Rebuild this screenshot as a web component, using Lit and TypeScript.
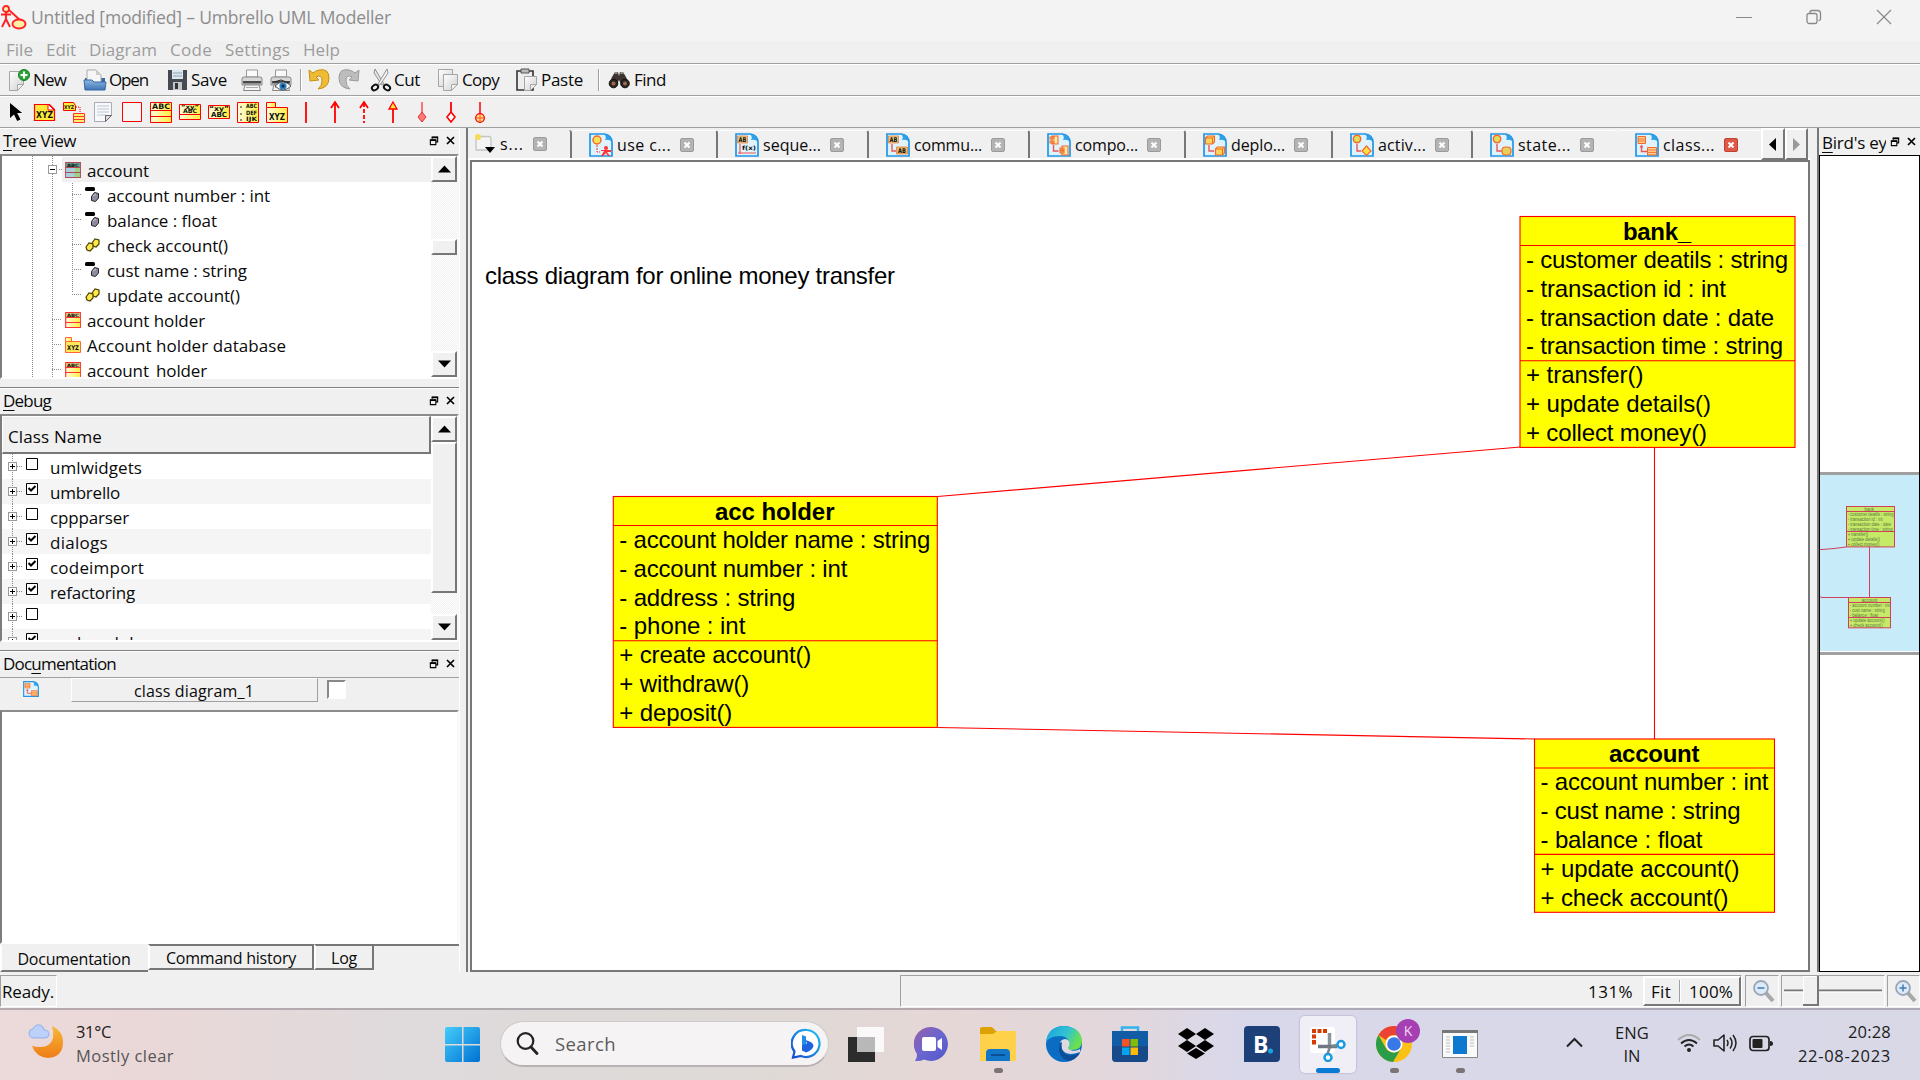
import { LitElement, html, css, svg } from "lit";
import { customElement, property } from "lit/decorators.js";
import { styleMap } from "lit/directives/style-map.js";
import { classMap } from "lit/directives/class-map.js";

/* One line of text whose tracking is set so that it fills a given width. */
@customElement("fit-text")
class FitText extends LitElement {
  @property({ type: Number }) w = 0;
  @property() text = "";
  @property({ type: Number }) accel = -1;
  static styles = css`
    :host { display: inline-block; white-space: nowrap; flex: none; }
    .run { display: inline-block; white-space: pre; }
    .key { text-decoration: underline; text-underline-offset: 3px; text-decoration-thickness: 1px; }
  `;
  render() {
    const a = this.accel;
    return a < 0
      ? html`<span class="run">${this.text}</span>`
      : html`<span class="run">${this.text.slice(0, a)}<span class="key">${this.text[a]}</span>${this.text.slice(a + 1)}</span>`;
  }
  updated() {
    const run = this.renderRoot.querySelector(".run") as HTMLElement;
    run.style.letterSpacing = "0px";
    const natural = run.getBoundingClientRect().width;
    if (this.w && natural) {
      run.style.letterSpacing = (this.w - natural) / this.text.length + "px";
      this.style.width = this.w + "px";
    }
  }
}

const fit = (text: string, w: number, accel = -1) => html`<fit-text .text=${text} .w=${w} .accel=${accel}></fit-text>`;

/* ---------- shared gradients ---------- */
const defs = svg`<defs>
  <linearGradient id="yl" x1="0" y1="0" x2="1" y2="0"><stop offset="0" stop-color="#fffde0"/><stop offset="1" stop-color="#ffef3a"/></linearGradient>
  <linearGradient id="gr" x1="0" y1="0" x2="1" y2="1"><stop offset="0" stop-color="#fff"/><stop offset="1" stop-color="#cfcfcf"/></linearGradient>
  <linearGradient id="bl" x1="0" y1="0" x2="0" y2="1"><stop offset="0" stop-color="#8fb7e2"/><stop offset="1" stop-color="#3f74b5"/></linearGradient>
  <linearGradient id="win" x1="0" y1="0" x2="1" y2="1"><stop offset="0" stop-color="#44cdfb"/><stop offset="1" stop-color="#0070d2"/></linearGradient>
  <linearGradient id="moon" x1="0" y1="0" x2="0" y2="1"><stop offset="0" stop-color="#f7b83a"/><stop offset="1" stop-color="#ef7d16"/></linearGradient>
</defs>`;

const ic = (body: unknown, w = 24, h = 24, vb = `0 0 ${w} ${h}`) =>
  html`<svg class="ic" width=${w} height=${h} viewBox=${vb}>${defs}${body}</svg>`;

/* ---------- toolbar icons ---------- */
const page = (x: number, y: number, w: number, h: number) =>
  svg`<path d="M${x} ${y}h${w}v${h - 6}l-6 6h-${w - 6}z" fill="url(#gr)" stroke="#a5a5a5"/><path d="M${x + w} ${y + h - 6}h-6v6z" fill="#eee" stroke="#999" stroke-width=".8"/>`;

const printer = svg`<path d="M6.500 2h11v7h-11z" fill="#fafafa" stroke="#999"/><path d="M2 11q0-2 2-2h16q2 0 2 2v6H2z" fill="#d6d6d6" stroke="#888"/><path d="M3 13h18v2.500H3z" fill="#4a4a4a"/><path d="M5 17h14l1.500 5.500h-17z" fill="#f4f4f4" stroke="#888"/><path d="M6 19.500h12" stroke="#aaa"/>`;

const ICONS: Record<string, unknown> = {
  new: svg`${page(1.5, 3.5, 14, 19)}<circle cx="16" cy="7" r="5.500" fill="#2ca336" stroke="#16801f"/><path d="M16 3.500v7M12.500 7h7" stroke="#fff" stroke-width="2"/>`,
  open: svg`<path d="M2 10h20v12H2z" fill="#3a6ba8"/><path d="M4 2h9l5 5v8H4z" fill="#f6f6f6" stroke="#aaa"/><path d="M13 2l5 5h-5z" fill="#ccc"/><path d="M1 12h8l2 2h12l-1 8H2z" fill="url(#bl)" stroke="#3868a5"/>`,
  save: svg`<path d="M2 2h19v20H2z" fill="#454a52"/><path d="M6 2h11v9H6z" fill="#dce6ef"/><path d="M7 5h9M7 8h9" stroke="#8ba3bb"/><path d="M7 14h9v8H7z" fill="#c2c6cb"/><path d="M9 15h3v6H9z" fill="#333"/>`,
  print: printer,
  preview: svg`${printer}<path d="M6 18q8-8 16 0q-8 8-16 0z" fill="#fff" stroke="#555"/><circle cx="14" cy="18" r="3.600" fill="#2d7fc4"/><circle cx="14" cy="18" r="1.500" fill="#0a2743"/><path d="M5 14l7-2l8 3" stroke="#222" fill="none"/>`,
  undo: svg`<path d="M2 2l1 11l9-1l-3-3q6-3 6 4q0 5-4 8q11-1 11-11q0-10-10-8q-4 1-6 3z" fill="#eebb35" stroke="#c78f13"/>`,
  redo: svg`<path d="M22 2l-1 11l-9-1l3-3q-6-3-6 4q0 5 4 8q-11-1-11-11q0-10 10-8q4 1 6 3z" fill="#bdbdbd" stroke="#9b9b9b"/>`,
  cut: svg`<path d="M6 1l9 15l-2 1L5 5z" fill="#e4e4e4" stroke="#777" stroke-width=".8"/><path d="M18 1l-9 15l2 1L19 5z" fill="#f4f4f4" stroke="#777" stroke-width=".8"/><ellipse cx="6" cy="19.500" rx="3.300" ry="2.500" fill="none" stroke="#111" stroke-width="2" transform="rotate(-35 6 19.500)"/><ellipse cx="18" cy="19.500" rx="3.300" ry="2.500" fill="none" stroke="#111" stroke-width="2" transform="rotate(35 18 19.500)"/>`,
  copy: svg`${page(1.500, 1.500, 14, 17)}${page(6.500, 6.500, 14, 16)}`,
  paste: svg`<path d="M2 3h16v19H2z" fill="#eee" stroke="#333" stroke-width="1.600"/><path d="M6 1h8v4H6z" fill="#bbb" stroke="#555"/>${page(9.500, 8.500, 12, 14)}`,
  find: svg`<path d="M4 9l3-5h3l1 4l1-4h3l3 5l3 7h-8l-2-4l-2 4H1z" fill="#3d3432"/><path d="M6.500 5h3M12.500 5h3" stroke="#aaa" stroke-width="1.500"/><circle cx="5.500" cy="15.500" r="4.300" fill="#2c2524" stroke="#111"/><circle cx="17" cy="15.500" r="4.300" fill="#2c2524" stroke="#111"/><circle cx="5.500" cy="15.500" r="2" fill="#a06a4a"/><circle cx="17" cy="15.500" r="2" fill="#a06a4a"/>`,
};

const R = "#f00";
const lab = (x: number, y: number, s: string, size = 8, len = 16) =>
  svg`<text x=${x} y=${y} font-family="DejaVu Sans, sans-serif" font-weight="bold" font-size=${size} textLength=${len} lengthAdjust="spacingAndGlyphs" fill="#111">${s}</text>`;

const TOOLS: unknown[] = [
  svg`<path d="M6 3v15l4-3.500l3.200 6.500l3.300-1.600l-3.300-6.400h5z" fill="#000"/>`,
  svg`<path d="M1.500 4.500h15l5 5v11h-20z" fill="#ffe93a" stroke="${R}" stroke-width="1.200"/><path d="M15 4l6 6h-6z" fill="#fff" stroke="${R}"/>${lab(3, 17.500, "XYZ", 8, 17)}`,
  svg`<path d="M1.500 2.500h10l2 3v5h-12z" fill="#ffe93a" stroke="${R}"/>${lab(2, 9, "XYZ", 5, 10)}<path d="M14 7h4v5" fill="none" stroke="${R}" stroke-dasharray="1 1"/><path d="M11.500 13.500h11v9h-11z" fill="#fff06a" stroke="#f33"/><path d="M12 16.500h10M12 19.500h10" stroke="#f33"/>`,
  svg`<path d="M3.500 2.500h17v13l-6 6h-11z" fill="#f7f9fa" stroke="#aab"/><path d="M6 6h12M6 9h12M6 12h12M6 15h9" stroke="#bcc8d2"/><path d="M20.500 15.500l-6 0v6z" fill="#ddd" stroke="#666"/>`,
  svg`<path d="M2.500 2.500h19v19h-19z" fill="#fafafa" fill-opacity=".5" stroke="${R}"/>`,
  svg`<path d="M1.500 2.500h21v20h-21z" fill="url(#yl)" stroke="${R}"/>${lab(3, 9, "ABC", 7.500, 18)}<path d="M1 10.500h22M1 16.500h22" stroke="${R}"/>`,
  svg`<path d="M1.500 4.500h21v15h-21z" fill="url(#yl)" stroke="${R}"/>${lab(3, 9, "“xy”", 6, 18)}${lab(5, 13, "ABC", 6, 14)}<path d="M1 14.500h22" stroke="${R}"/>`,
  svg`<path d="M1.500 5.500h21v13h-21z" fill="url(#yl)" stroke="${R}"/>${lab(2, 11, "“xy”", 7, 20)}${lab(4, 17, "ABC", 7, 16)}`,
  svg`<path d="M1.500 2.500h21v20h-21z" fill="url(#yl)" stroke="${R}"/>${lab(10, 8, "ABC", 6, 11)}${lab(10, 15, "DEF", 6, 11)}${lab(10, 21, "IJK", 6, 11)}<path d="M4 7h2M4 14h2M4 20h2" stroke="#222"/>`,
  svg`<path d="M1.500 2.500h9v5h-9z" fill="url(#yl)" stroke="${R}"/><path d="M1.500 7.500h21v15h-21z" fill="url(#yl)" stroke="${R}"/>${lab(4, 20, "XYZ", 9, 16)}`,
  svg`<path d="M12 2v21" stroke="${R}" stroke-width="1.800"/>`,
  svg`<path d="M12 2v21M8 8l4-6l4 6" fill="none" stroke="${R}" stroke-width="1.800"/>`,
  svg`<path d="M12 3v20" stroke="${R}" stroke-width="1.800" stroke-dasharray="4 2"/><path d="M8 8l4-6l4 6" fill="none" stroke="${R}" stroke-width="1.800"/>`,
  svg`<path d="M12 8v15" stroke="${R}" stroke-width="1.800"/><path d="M8 9l4-7l4 7z" fill="#ffe93a" stroke="${R}" stroke-width="1.300"/>`,
  svg`<path d="M12 2v14" stroke="#f66" stroke-width="1.800"/><path d="M12 12l4 5l-4 5l-4-5z" fill="#f77" stroke="#d33"/>`,
  svg`<path d="M12 2v11" stroke="${R}" stroke-width="1.800"/><path d="M12 12l4 5l-4 5l-4-5z" fill="#fff" stroke="${R}" stroke-width="1.600"/>`,
  svg`<path d="M12 2v21M7.500 18h9" stroke="${R}" stroke-width="1.500"/><circle cx="12" cy="18" r="4.300" fill="#ffe26a" stroke="${R}" stroke-width="1.300"/><path d="M12 14v8M8 18h8" stroke="#f55"/>`,
];

/* ---------- tree icons ---------- */
const T_ICONS: Record<string, unknown> = {
  cls: svg`<path d="M.7.700h15v15h-15z" fill="url(#yl)" stroke="#f33" stroke-width="1.200"/><path d="M1 1h14v4H1z" fill="#d6bd72"/>${lab(2, 4.800, "ABC", 4.500, 12)}<path d="M0 5.500h16M0 10.500h16" stroke="#f33"/>`,
  clsSel: svg`<path d="M.7.700h15v15h-15z" fill="#9fd08a" stroke="#b04a5a" stroke-width="1.200"/><path d="M1 1h14v4H1z" fill="#62a08c"/><path d="M1 6h9v4H1zM1 11h8v4H1z" fill="#a9cfe0"/>${lab(2, 4.800, "ABC", 4.500, 12)}<path d="M0 5.500h16M0 10.500h16" stroke="#b04a5a"/>`,
  pkg: svg`<path d="M.5.500h6v4h-6z" fill="url(#yl)" stroke="#f63"/><path d="M.5 4.500h15v11h-15z" fill="#ffe95a" stroke="#f63"/>${lab(2, 13, "XYZ", 6.500, 12)}`,
  attr: svg`<rect x="0" y="0" width="10" height="4" rx="1.500" fill="#000"/><path d="M6.500 9.500l3-4l4 1v4.500l-3 3.500l-4-1z" fill="#8d8aa0" stroke="#222"/><path d="M8 9l3-2" stroke="#ccc"/>`,
  oper: svg`<path d="M7 6l3-4l4 1v4l-3 3l-3-1z" fill="#ffe84a" stroke="#4a4000" stroke-width="1.200"/><path d="M1 10l3-4l4 1v4l-3 3l-3-1z" fill="#ffe84a" stroke="#4a4000" stroke-width="1.200"/>`,
};

type Row = { t: string; w: number; icon: string; lvl: number; sel?: boolean };
const TREE: Row[] = [
  { t: "account", w: 62, icon: "clsSel", lvl: 0, sel: true },
  { t: "account number : int", w: 163, icon: "attr", lvl: 1 },
  { t: "balance : float", w: 110, icon: "attr", lvl: 1 },
  { t: "check account()", w: 121, icon: "oper", lvl: 1 },
  { t: "cust name : string", w: 140, icon: "attr", lvl: 1 },
  { t: "update account()", w: 133, icon: "oper", lvl: 1 },
  { t: "account holder", w: 118, icon: "cls", lvl: 0 },
  { t: "Account holder database", w: 199, icon: "pkg", lvl: 0 },
  { t: "account_holder", w: 120, icon: "cls", lvl: 0 },
];

const DEBUG: [string, number, boolean][] = [
  ["umlwidgets", 92, false], ["umbrello", 70, true], ["cppparser", 79, false], ["dialogs", 58, true],
  ["codeimport", 94, true], ["refactoring", 85, true], ["", 0, false], ["umlmodel", 84, true],
];

/* ---------- diagram tab icons ---------- */
const Y = "#ffd35a", O = "#f26b2a";
const DOC: Record<string, unknown> = {
  use: svg`<circle cx="8" cy="7" r="4" fill="#f6e05a" stroke="${O}" stroke-width="1.500"/><path d="M8 12v7h3" fill="none" stroke="#e33" stroke-dasharray="2 1"/><circle cx="17" cy="15" r="2" fill="#f33"/><path d="M12 17h10v2h-4l3 4h-2l-2-3l-3 3h-2l3-5h-3z" fill="#f33"/>`,
  seq: svg`<path d="M2.500 3h10v7h-10z" fill="#e2d08a" stroke="${O}" stroke-width=".7"/>${lab(3.500, 9, "AB", 6.500, 8)}<path d="M5 11v10M3 20h18" stroke="#e55" stroke-width="1.200"/>${lab(7, 17, "f(x)", 6, 14)}`,
  com: svg`<path d="M2.500 3h10v7h-10z" fill="#e2d08a" stroke="${O}" stroke-width=".7"/>${lab(3.500, 9, "AB", 6.500, 8)}<path d="M6 11v7h4" fill="none" stroke="#e55" stroke-width="1.400"/><path d="M10.500 14h11v7h-11z" fill="#e2c070" stroke="${O}" stroke-width=".7"/>${lab(12, 20, "AB", 6.500, 8)}`,
  cmp: svg`<path d="M5 3h6v8H5zM3 4h4v2H3zM3 8h4v2H3zM15 13h6v9h-6zM13 15h4v2h-4zM13 18h4v2h-4z" fill="#ffe9a8" stroke="${O}" stroke-width="1.100"/><path d="M6.500 12v6h5" fill="none" stroke="#e55" stroke-width="1.400"/>`,
  dep: svg`<path d="M2.500 5l2-2h7v6l-2 2h-7zM12.500 16l2-2h7v6l-2 2h-7z" fill="${Y}" stroke="${O}" stroke-width="1.100"/><path d="M2.500 5h7v6M9.500 5l2-2M12.500 16h7v6M19.500 16l2-2" fill="none" stroke="${O}"/><path d="M6 12v6h5" fill="none" stroke="#e55" stroke-width="1.400"/>`,
  act: svg`<circle cx="7" cy="6" r="3.700" fill="#e2dc5a" stroke="${O}" stroke-width="1.500"/><path d="M7 11v7h4" fill="none" stroke="#e55" stroke-width="1.400"/><path d="M16.500 13l4.500 5l-4.500 4.500l-4.500-4.500z" fill="#ffe04a" stroke="${O}" stroke-width="1.200"/>`,
  sta: svg`<circle cx="7" cy="6" r="3.700" fill="#e2dc5a" stroke="${O}" stroke-width="1.500"/><path d="M7 11v7h5" fill="none" stroke="#e55" stroke-width="1.400"/><rect x="12" y="14" width="9" height="8" rx="3.500" fill="#e6d05a" stroke="${O}" stroke-width="1.200"/>`,
  cls: svg`<path d="M3 3.500h7.500v7H3z" fill="#ffc98a" stroke="${O}"/><path d="M3 6h7.500M3 8h7.500" stroke="${O}" stroke-width=".8"/><path d="M6.500 14v4.500h6" fill="none" stroke="#e55" stroke-width="1.400"/><path d="M4.500 14.500l2-3l2 3z" fill="#e55"/><path d="M12.500 14.500h9V22h-9z" fill="#ffc98a" stroke="${O}"/><path d="M12.500 17h9M12.500 19.500h9" stroke="${O}" stroke-width=".8"/>`,
};
const docIcon = (k: string, s = 24) =>
  ic(svg`<path d="M1 1h14.500q7 1 7.500 8v14H1z" fill="#dff3fd" stroke="#2196e6" stroke-width="1.700"/><path d="M15 1q7 0 8 9q-1-4-7-3q2-3-1-6z" fill="#2f9fe8"/>${DOC[k]}`, s, s, "0 0 24 24");

const closeBox = (hot = false) =>
  ic(svg`<rect x=".5" y=".500" width="13" height="13" rx="1.500" fill=${hot ? "#dd5a48" : "#b4b4b4"} stroke=${hot ? "#c2402f" : "#9b9b9b"}/><path d="M4.500 4.500l5 5M9.500 4.500l-5 5" stroke="#fff" stroke-width="2"/>`, 14, 14);

/* icon, label, label width, tab width */
const TABS: [string, string, number, number][] = [
  ["use", "use c...", 54, 146], ["seq", "seque...", 58, 151], ["com", "commu...", 68, 161], ["cmp", "compo...", 63, 156],
  ["dep", "deplo...", 54, 147], ["act", "activ...", 48, 140], ["sta", "state...", 53, 145], ["cls", "class...", 52, 143],
];

/* ---------- diagram ---------- */
type Line = [string, number];
type Box = { x: number; y: number; w: number; title: string; tx: number; tw: number; attrs: Line[]; ops: Line[] };
const P = 28.8;
const BOXES: Box[] = [
  { x: 1520, y: 216.5, w: 275, title: "bank_", tx: 1623, tw: 68, attrs: [["- customer deatils : string", 262], ["- transaction id : int", 200], ["- transaction date : date", 248], ["- transaction time : string", 257]], ops: [["+ transfer()", 117.5], ["+ update details()", 185], ["+ collect money()", 181]] },
  { x: 613.3, y: 496.5, w: 324, title: "acc holder", tx: 715, tw: 119.5, attrs: [["- account holder name : string", 311], ["- account number : int", 228], ["- address : string", 176], ["- phone : int", 126]], ops: [["+ create account()", 192], ["+ withdraw()", 130], ["+ deposit()", 113]] },
  { x: 1534.5, y: 739, w: 240, title: "account", tx: 1609, tw: 90.5, attrs: [["- account number : int", 228], ["- cust name : string", 200], ["- balance : float", 162]], ops: [["+ update account()", 199], ["+ check account()", 188]] },
];
const umlBox = (b: Box) => {
  const n1 = b.attrs.length, n = n1 + b.ops.length + 1;
  const all = [...b.attrs, ...b.ops];
  return svg`
    <rect x=${b.x} y=${b.y} width=${b.w} height=${n * P + 0.5} fill="#ff0" stroke="#f00" stroke-width="1.100"/>
    <path d="M${b.x} ${b.y + P + 0.2}h${b.w}M${b.x} ${b.y + P * (n1 + 1) + 0.2}h${b.w}" stroke="#f00" stroke-width="1.100"/>
    <text class="ttl" x=${b.tx} y=${b.y + 23} textLength=${b.tw}>${b.title}</text>
    ${all.map(([t, w], i) => svg`<text x=${b.x + 6} y=${b.y + 51.4 + i * P} textLength=${w}>${t}</text>`)}`;
};

/* overview copy of a class box, scaled down to the given place */
const miniBox = (b: Box, x: number, y: number, w: number) => {
  const k = w / b.w, n1 = b.attrs.length, all = [...b.attrs, ...b.ops];
  return svg`
  <rect x=${x} y=${y} width=${w} height=${(all.length + 1) * 5.05} fill="#c6e968" stroke="#d0405c"/>
  <path d="M${x} ${y + 5}h${w}M${x} ${y + 5 * (n1 + 1)}h${w}" stroke="#d0405c"/>
  <text class="mini" x=${x + (b.tx - b.x) * k} y=${y + 4.2} textLength=${b.tw * k} lengthAdjust="spacingAndGlyphs">${b.title}</text>
  ${all.map(([t, tw], i) => svg`<text class="mini" x=${x + 1.2} y=${y + 9.2 + i * 5.03} textLength=${tw * k} lengthAdjust="spacingAndGlyphs">${t}</text>`)}`;
};

/* ---------- taskbar ---------- */
const TASKS: [unknown, string][] = [
  [svg`<path d="M0 11h27v25H0z" fill="#2c2c2c"/><path d="M9 1h27v25H9z" fill="#fff" fill-opacity=".82"/><path d="M9 11h18v15H9z" fill="#b8b8b8"/>`, ""],
  [svg`<defs><linearGradient id="ch" x1="0" y1="0" x2="1" y2="1"><stop offset="0" stop-color="#9a5fa8"/><stop offset=".5" stop-color="#6a66cf"/><stop offset="1" stop-color="#5257cc"/></linearGradient></defs><path d="M18 1a17 17 0 1 1-8 32.500q-4 2-9 1.500q2-3 2-7A17 17 0 0 1 18 1z" fill="url(#ch)"/><rect x="8" y="11" width="14" height="14" rx="2" fill="#fff"/><path d="M23.500 15l4.500-3v12l-4.500-3z" fill="#fff"/>`, ""],
  [svg`<path d="M0 3q0-2 2-2h10l4 4h20v10H0z" fill="#dda100"/><path d="M0 8h13l4-3h19v30H0z" fill="#ffd04a"/><path d="M6 35v-8q0-4 4-4h16q4 0 4 4v8z" fill="#1277c8"/><path d="M11 29h14" stroke="#0a4f92" stroke-width="2"/>`, "dot"],
  [svg`<defs><linearGradient id="e1" x1="0" y1="0" x2="1" y2=".4"><stop offset="0" stop-color="#1ba0e0"/><stop offset=".6" stop-color="#31c3d2"/><stop offset="1" stop-color="#6be04e"/></linearGradient></defs><circle cx="18" cy="18" r="18" fill="#0b6cc4"/><path d="M0 16Q2 0 18 0q17 1 18 15q0 9-10 9q-5 0-5-2q2-2 2-5q-1-7-9-7Q4 10 0 16z" fill="url(#e1)"/><path d="M14 17q-4 13 8 18q8-1 12-8q-14 6-18-3q-1-3 2-8q-3-1-4 1z" fill="#0c4e98"/><path d="M14 17q1-4 6-4q5 2 3 7q-3 3 3 4.500q4 1 8-1.500v3q-14 5-18-3q-1-4 0-7z" fill="#dfd9e2"/>`, ""],
  [svg`<path d="M10 7V1.500h16V7" fill="none" stroke="#2fb4ee" stroke-width="2.500"/><path d="M0 5h36v27q0 4-4 4H4q-4 0-4-4z" fill="#125ba5"/><path d="M0 20h36v12q0 4-4 4H4q-4 0-4-4z" fill="#1b427b" opacity=".65"/><path d="M10 13h7.500v7.500H10z" fill="#f35325"/><path d="M18.500 13H26v7.500h-7.500z" fill="#81bc06"/><path d="M10 21.500h7.500V29H10z" fill="#05a6f0"/><path d="M18.500 21.500H26V29h-7.500z" fill="#ffba08"/>`, ""],
  [svg`<path d="M9 2l9 6-9 6-9-6zM27 2l9 6-9 6-9-6zM9 14l9 6-9 6-9-6zM27 14l9 6-9 6-9-6zM18 22l9 5.500-9 5.500-9-5.500z" fill="#000"/>`, ""],
  [svg`<path d="M0 4q0-4 4-4h28q4 0 4 4v28q0 4-4 4H0z" fill="#1d4078"/><text x="9" y="27" font-family="Open Sans, sans-serif" font-weight="bold" font-size="23" fill="#fff">B</text><circle cx="26.500" cy="25" r="2.500" fill="#18a4e4"/>`, ""],
  [svg`<rect x="0" y="1" width="25" height="26" rx="3" fill="#fff"/><path d="M2 3h4v4H2zM7.500 3h4v4h-4zM13 3h4v4h-4zM2 8.500h4v4H2zM2 14h4v4.500H2z" fill="#d83b01"/><path d="M19.500 7v15.500" stroke="#8a9299" stroke-width="3.500"/><path d="M8 20.500h19" stroke="#6f7880" stroke-width="3.500"/><path d="M19.500 22l-2 6M22 20l5-1" stroke="#7c8790" stroke-width="2.500"/><circle cx="31" cy="18.500" r="3.500" fill="#fff" stroke="#1a9be0" stroke-width="2.500"/><circle cx="18" cy="31.500" r="3.500" fill="#fff" stroke="#1a9be0" stroke-width="2.500"/>`, "active"],
  [svg`<circle cx="18" cy="18" r="18" fill="#fbc116"/><path d="M2.400 9A18 18 0 0 1 33.600 9H18a9 9 0 0 0-8 5z" fill="#ea4335"/><path d="M2.400 9A18 18 0 0 0 17 36l8-13.500a9 9 0 0 1-15 0z" fill="#2a9d4b"/><circle cx="18" cy="18" r="8.500" fill="#fff"/><circle cx="18" cy="18" r="6.800" fill="#3b78e7"/>`, "dot badge"],
  [svg`<path d="M.5 4.500h35v27h-35z" fill="#fafafa" stroke="#888"/><path d="M0 4h36v3H0z" fill="#777"/><path d="M11 10h14v18H11z" fill="#0f79cf"/><path d="M4 11h4M4 14h4M4 17h4M4 20h4M4 23h4M4 26h4M28 11h4M28 14h4M28 17h4M28 20h4" stroke="#bbb"/>`, "dot"],
];

@customElement("app-root")
class AppRoot extends LitElement {
  static styles = css`
    :host { display: block; width: 1920px; height: 1080px; overflow: hidden; font-family: "Open Sans", "Noto Sans", sans-serif; font-size: 17px; color: #0a0a0a; }
    * { box-sizing: border-box; }
    .win { display: flex; flex-direction: column; height: 1080px; background: #f0f0f0; }
    .ic { display: block; flex: none; }
    .title { height: 41px; background: #f3f3f3; display: flex; align-items: flex-start; color: #8c8c8c; font-size: 17.5px; }
    .title .ic { margin: 5px 4px 0 1px; }
    .title .cap { line-height: 35px; flex: 1; }
    .title .ctl { display: flex; align-items: center; height: 34px; gap: 54px; margin-right: 28px; }
    .title .ctl .ic { margin: 0; }
    .menu { height: 23px; border-bottom: 1px solid #a0a0a0; display: flex; padding-left: 6px; line-height: 17px; color: #9c9c9c; }
    .menu fit-text { margin-right: 13px; }
    .tools { height: 32px; border-top: 1px solid #fff; border-bottom: 1px solid #a0a0a0; display: grid; align-items: center; line-height: 28px; }
    .t1 { grid-template-columns: 25px 50px 26px 57px 25px 49px 29px 31px 7px 30px 32px 25px 43px 25px 53px 26px 57px 10px 26px auto; padding-left: 8px; }
    .t2 { display: flex; gap: 5px; padding-left: 4px; }
    .sep { width: 2px; height: 22px; border-left: 1px solid #a0a0a0; border-right: 1px solid #fff; }
    .main { height: 844px; display: flex; }
    .left { width: 460px; border-right: 1px solid #fff; display: flex; flex-direction: column; }
    .dock { display: flex; flex-direction: column; border-bottom: 1px solid #808080; border-top: 1px solid #fff; }
    .d1 { height: 260px; } .d2 { height: 263px; } .d3 { height: 321px; border-bottom: 0; }
    .dt { height: 25px; display: flex; align-items: center; padding: 0 4px 2px 3px; line-height: 26px; flex: none; }
    .dt .lbl { flex: 1; }
    .dt .ic { margin-left: 7px; }
    .frame { border: 2px solid; border-color: #8c8c8c #f8f8f8 #fff #7d7d7d; width: 459px; display: flex; background: #fff; overflow: hidden; position: relative; }
    .f1 { height: 225px; } .f2 { height: 228px; }
    .list { flex: 1; overflow: hidden; position: relative; }
    .rows { padding-top: 1px; }
    .guides { position: absolute; left: 0; top: 0; }
    .row { display: flex; height: 25px; align-items: center; line-height: 25px; position: relative; }
    .row fit-text { padding-top: 1px; }
    .row .ic { margin-right: 6px; }
    .r0 { margin-left: 60px; padding-left: 3px; }
    .r1 { padding-left: 83px; }
    .sel { background: #f0f0f0; }
    .head { height: 38px; border: 1px solid #fff; border-right: 2px solid #777; border-bottom: 2px solid #777; background: #f0f0f0; padding-left: 5px; line-height: 39px; }
    .drow { height: 25px; display: grid; grid-template-columns: 24px 24px 1fr; line-height: 27px; }
    .drow:nth-child(even) { background: #f5f5f5; }
    .box { width: 12px; height: 12px; margin-top: 4px; }
    .bar { width: 26px; display: flex; flex-direction: column; background: repeating-conic-gradient(#fff 0 25%, #f0f0f0 0 50%) 0 0 / 2px 2px; }
    .btn { border: 2px solid; border-color: #fff #777 #777 #fff; background: #f0f0f0; display: flex; align-items: center; justify-content: center; flex: none; }
    .bar .btn { height: 26px; }
    .bar .th1 { height: 16px; margin: 57px 0 auto; }
    .bar .th2 { height: 151px; margin-bottom: auto; }
    .drow2 { height: 33px; border-top: 1px solid #a0a0a0; display: flex; }
    .drow2 > .ic { margin: 3px 32px 0 23px; }
    .name { width: 247px; height: 24px; border: 1px solid; border-color: #fff #a0a0a0 #a0a0a0 #fff; text-align: center; line-height: 24px; font-size: 16px; padding-right: 1px; }
    .chk { width: 19px; height: 19px; margin: 2px 0 0 9px; background: #fff; border: 2px solid; border-color: #888 #fff #fff #888; }
    .f3 { height: 234px; }
    .btabs { display: flex; height: 28px; font-size: 16px; line-height: 27px; }
    .bt { text-align: center; border: 2px solid; border-color: #777 #777 #777 #fff; height: 26px; line-height: 24px; }
    .bt.on { border-color: #f0f0f0 #f0f0f0 #777 #fff; height: 28px; line-height: 27px; border-right: 0; padding-right: 2px; }
    .fill { flex: 1; border-top: 2px solid #777; }
    .mdi { width: 1345px; margin-left: 6px; border-left: 2px solid #777; display: flex; flex-direction: column; }
    .tabs { height: 32px; display: flex; padding-left: 3px; border-bottom: 2px solid #fff; padding-top: 2px; font-size: 16px; }
    .tab { display: flex; align-items: center; height: 28px; border-right: 2px solid #777; border-top: 1px solid #fff; padding-left: 17px; line-height: 26px; border-radius: 3px 3px 0 0; }
    .tab .ic + fit-text { margin: 0 9px 0 4px; }
    .tab.first { width: 101px; padding-left: 2px; border-top: 0; }
    .tab.first .ic + fit-text { margin: 0 9px 0 3px; }
    .tab.last { border-right: 0; }
    .tabs .btn { height: 32px; margin-top: -2px; }
    .b1 { width: 24px; } .b2 { width: 23px; }
    .canvas { width: 1340px; margin-left: 2px; height: 812px; border: 2px solid #777; background: #fff; }
    .canvas svg { display: block; }
    .canvas text { font-family: "Liberation Sans", Arial, sans-serif; font-size: 24px; fill: #000; }
    .canvas .ttl { font-weight: bold; }
    .bird { width: 103px; display: flex; flex-direction: column; border-left: 2px solid #777; margin-left: 6px; }
    .bird .dt { height: 27px; padding: 0 4px 0 3px; }
    .bird .dt .nm { width: 64px; overflow: hidden; height: 25px; line-height: 25px; margin: 2px auto 0 0; }
    .bird .dt .ic { margin-left: 0; } .bird .dt .ic + .ic { margin-left: 7px; }
    .view { flex: 1; border: 1px solid #000; background: #fff; }
    .view svg { display: block; }
    .mini { font-family: "Liberation Sans", sans-serif; font-size: 4.600px; fill: #3f5a3a; opacity: .8; }
    .status { height: 36px; display: flex; padding-top: 3px; }
    .cell { height: 32px; border: 1px solid; border-color: #a0a0a0 #fff #fff #a0a0a0; display: flex; align-items: center; line-height: 31px; }
    .ready { width: 57px; padding-left: 1px; margin-right: 843px; }
    .msg { width: 843px; justify-content: flex-end; }
    .zoom { width: 98px; height: 30px; margin-left: 10px; padding: 0 0 0 6px; justify-content: flex-start; }
    .zoom .sep { margin: 0 8px 0 8px; }
    .zi { width: 34px; margin-left: 3px; padding-left: 6px; }
    .sl { width: 104px; margin-left: 2px; } .sl svg { display: block; }
    .zo { width: 33px; margin-left: 2px; padding-left: 6px; }
    .taskbar { height: 72px; border-top: 2px solid rgba(120,110,120,.45); display: flex; align-items: flex-start; color: #1c1c1c; font-size: 16.5px;
      background: linear-gradient(90deg, #ecdada 0, #ead8d8 150px, #dfdadc 400px, #dddad8 660px, #e0d9d6 800px, #e6d7d7 950px, #e2d7dc 1120px, #d9d8ea 1240px, #d9d8e7 1920px); }
    .wx { margin: 14px 13px 0 28px; }
    .two { display: flex; flex-direction: column; line-height: 24px; padding-top: 10px; }
    .grey { color: #555; }
    .start { margin: 17px 21px 0 271px; }
    .search { width: 329px; height: 46px; margin-top: 11px; border-radius: 23px; background: #f5f3f3; border: 1px solid #cfc9c9; border-bottom: 2px solid #b9b1b3; display: flex; align-items: center; padding: 0 6px 0 15px; color: #5c5c5c; font-size: 18.5px; margin-left: -1px; }
    .search fit-text { margin-left: 16px; } .search .ic:last-child { margin-left: auto; }
    .apps { display: flex; gap: 10px; margin: 6px 0 0 9px; }
    .app { width: 56px; height: 57px; border-radius: 5px; padding: 10px; position: relative; }
    .app.active { background: rgba(255,255,255,.6); box-shadow: 0 0 1px 1px rgba(120,110,140,.2); }
    .pip { position: absolute; left: 24px; bottom: 0; width: 9px; height: 5px; border-radius: 3px; background: #7b7474; }
    .active .pip { left: 16px; width: 24px; background: #0b79d6; bottom: 0; }
    .bdg { position: absolute; left: 30px; top: 3px; width: 24px; height: 24px; border-radius: 50%; background: #a63fb2; color: #eedcf2; text-align: center; line-height: 24px; font-size: 14px; }
    .tray { display: flex; margin-left: auto; width: 426px; }
    .caret { margin: 27px 0 0 72px; }
    .lang { align-items: center; margin-left: 32px; padding-top: 11px; line-height: 23px; width: 34px; }
    .wifi { margin: 21px 0 0 28px; } .spk { margin: 21px 0 0 12px; } .bat { margin: 21px 0 0 11px; }
    .clock { align-items: flex-end; margin-left: 25px; }
  `;

  dockIcons() {
    return html`${ic(svg`<path d="M3.500 3V1.500h6v5H8M1 4.500h6.500v5h-6v-5" fill="none" stroke="#000" stroke-width="1.200"/><path d="M3 1.500h7M1 4.500h7" stroke="#000" stroke-width="2"/>`, 10, 10, "0 0 11 11")}${ic(svg`<path d="M1 1l7 7M8 1l-7 7" stroke="#000" stroke-width="1.700"/>`, 9, 9)}`;
  }
  dockTitle(t: string, w: number, a: number) {
    return html`<div class="dt"><span class="lbl">${fit(t, w, a)}</span>${this.dockIcons()}</div>`;
  }
  arrow(d: string) { return ic(svg`<path d=${d} fill="#000"/>`, 13, 8); }

  leftPanel() {
    const up = "M0 7.500h13L6.500 .5z", dn = "M0 .5h13L6.500 7.500z";
    return html`<div class="left">
      <div class="dock d1">
        ${this.dockTitle("Tree View", 73, 0)}
        <div class="frame f1">
          <div class="list rows">
            <svg class="guides" width="429" height="222" shape-rendering="crispEdges">
              <g stroke="#8a8a8a" stroke-dasharray="1 1" fill="none">
                <path d="M30.500 0v222M50.500 0v222M70.500 27v110M57 13.500h4M70 38.500h9M70 63.500h9M70 88.500h9M70 113.500h9M70 138.500h9M50 163.500h10M50 188.500h10M50 213.500h10"/>
              </g>
              <path d="M46.500 9.500h8v8h-8z" fill="#fff" stroke="#999"/><path d="M48 13.500h5" stroke="#000"/>
            </svg>
            ${TREE.map(r => html`<div class=${classMap({ row: true, r0: r.lvl === 0, r1: r.lvl === 1, sel: !!r.sel })}>${ic(T_ICONS[r.icon], 16, 16)}${fit(r.t, r.w)}</div>`)}
          </div>
          <div class="bar"><div class="btn">${this.arrow(up)}</div><div class="btn th1"></div><div class="btn">${this.arrow(dn)}</div></div>
        </div>
      </div>
      <div class="dock d2">
        ${this.dockTitle("Debug", 48, 0)}
        <div class="frame f2">
          <div class="list">
            <div class="head">${fit("Class Name", 94)}</div>
            <div>
            ${DEBUG.map(([t, w, on]) => html`<div class="drow">
              <svg width="24" height="25" shape-rendering="crispEdges"><path d="M10.500 0v25M15 12.500h6" stroke="#8a8a8a" stroke-dasharray="1 1"/><path d="M6.500 8.500h8v8h-8z" fill="#fff" stroke="#999"/><path d="M8 12.500h5M10.500 10v5" stroke="#000"/></svg>
              <svg class="box" viewBox="0 0 12 12"><path d="M.5.500h11v11H.5z" fill="#fff" stroke="#000"/>${on ? svg`<path d="M2.500 5l2.500 2.500L9.500 3" fill="none" stroke="#000" stroke-width="2"/>` : ""}</svg>
              ${t ? fit(t, w) : ""}</div>`)}
            </div>
          </div>
          <div class="bar"><div class="btn">${this.arrow(up)}</div><div class="btn th2"></div><div class="btn">${this.arrow(dn)}</div></div>
        </div>
      </div>
      <div class="dock d3">
        ${this.dockTitle("Documentation", 113, 3)}
        <div class="drow2">${docIcon("cls", 16)}<div class="name">${fit("class diagram_1", 120)}</div><div class="chk"></div></div>
        <div class="frame f3"></div>
        <div class="btabs">
          <div class="bt on" style=${styleMap({ width: "148px" })}>${fit("Documentation", 113)}</div>
          <div class="bt" style=${styleMap({ width: "166px" })}>${fit("Command history", 130)}</div>
          <div class="bt" style=${styleMap({ width: "60px" })}>${fit("Log", 26)}</div>
          <div class="fill"></div>
        </div>
      </div>
    </div>`;
  }

  mdi() {
    return html`<div class="mdi">
      <div class="tabs">
        <div class="tab first">${ic(svg`<path d="M6 4.500h10q2 0 2 2V18H3V7" fill="#f4f4f4" stroke="#c4c4c4" stroke-width="1.300"/><circle cx="5" cy="5" r="3" fill="#f5dc52"/><path d="M12 15h10l-5 6z" fill="#000"/>`, 24, 24)}${fit("s...", 24)}${closeBox()}</div>
        ${TABS.map(([k, t, w, tw], i) => html`<div class=${classMap({ tab: true, last: i > 5 })} style=${styleMap({ width: tw + "px" })}>${docIcon(k)}${fit(t, w)}${closeBox(i === 7)}</div>`)}
        <div class="btn b1">${ic(svg`<path d="M7 0v13L0 6.500z" fill="#000"/>`, 8, 13)}</div>
        <div class="btn b2">${ic(svg`<path d="M0 0v13l7-6.500z" fill="#999"/>`, 8, 13)}</div>
      </div>
      <div class="canvas">
        <svg width="1336" height="808" viewBox="472 162 1336 808">
          <text x="485" y="283.500" textLength="410">class diagram for online money transfer</text>
          <path d="M937.500 496.500L1520.500 447M937.500 727.500L1534.500 739M1654.500 447V739" stroke="#f00" stroke-width="1.100" fill="none"/>
          ${BOXES.map(umlBox)}
        </svg>
      </div>
    </div>`;
  }

  bird() {
    return html`<div class="bird">
      <div class="dt"><div class="nm">${fit("Bird's eye view", 113, 0)}</div>${this.dockIcons()}</div>
      <div class="view">
        <svg width="99" height="815" viewBox="1820 156 99 815">
          <path d="M1820 472h100v3h-100zM1820 652h100v3h-100z" fill="#a0a0a0"/><path d="M1820 475h100v176h-100z" fill="#c8ebfa"/>
          <path d="M1819 549.500h3l12-1l12-1.500M1819 596.500l3 1h27M1869.500 547v50" stroke="#d0405c" fill="none"/>
          ${miniBox(BOXES[0], 1846.5, 506.5, 48)}
          ${miniBox(BOXES[2], 1848.5, 597.5, 42)}
        </svg>
      </div>
    </div>`;
  }

  render() {
    const mag = (plus: boolean) => ic(svg`<path d="M14 14l7 8" stroke="#a8a8a8" stroke-width="4"/><circle cx="9" cy="9" r="7" fill="#dcebf9" stroke="#9aa8b5" stroke-width="1.800"/><path d="M5.500 9h7" stroke="#4a80b5" stroke-width="1.600"/>${plus ? svg`<path d="M9 5.500v7" stroke="#4a80b5" stroke-width="1.600"/>` : ""}`, 24, 24);
    return html`<div class="win">
      <div class="title">
        ${ic(svg`<circle cx="5" cy="4" r="3" fill="#fff4b0" stroke="#f22" stroke-width="1.800"/><path d="M5 7v8M0 9.500h10M5 14l-4 8M5 14l4 8M8 5l12 11" fill="none" stroke="#f22" stroke-width="1.900"/><ellipse cx="18" cy="19" rx="6.500" ry="4.500" fill="#fff0a8" stroke="#f22" stroke-width="1.900"/>`, 26, 25)}
        <div class="cap">${fit("Untitled [modified] – Umbrello UML Modeller", 360)}</div>
        <div class="ctl">
          ${ic(svg`<path d="M0 8.500h16" stroke="#888"/>`, 16, 16)}
          ${ic(svg`<rect x="1" y="4.500" width="10" height="10" rx="2" fill="none" stroke="#888" stroke-width="1.300"/><path d="M4 4V3q0-1.500 2-1.500h5.500q3 0 3 3V10q0 1.500-2 1.500" fill="none" stroke="#888" stroke-width="1.300"/>`, 16, 16)}
          ${ic(svg`<path d="M1 1l14 14M15 1L1 15" stroke="#888" stroke-width="1.200"/>`, 16, 16)}
        </div>
      </div>
      <div class="menu">${([["File", 27], ["Edit", 30], ["Diagram", 68], ["Code", 42], ["Settings", 65], ["Help", 37]] as [string, number][]).map(([t, w]) => fit(t, w))}</div>
      <div class="tools t1">
        ${ic(ICONS.new)}${fit("New", 33)}${ic(ICONS.open)}${fit("Open", 39)}${ic(ICONS.save)}${fit("Save", 36)}
        ${ic(ICONS.print)}${ic(ICONS.preview)}<div class="sep"></div>${ic(ICONS.undo)}${ic(ICONS.redo)}
        ${ic(ICONS.cut)}${fit("Cut", 26)}${ic(ICONS.copy)}${fit("Copy", 37)}${ic(ICONS.paste)}${fit("Paste", 42)}
        <div class="sep"></div>${ic(ICONS.find)}${fit("Find", 32)}
      </div>
      <div class="tools t2">${TOOLS.map(t => ic(t))}</div>
      <div class="main">${this.leftPanel()}${this.mdi()}${this.bird()}</div>
      <div class="status">
        <div class="cell ready">${fit("Ready.", 52)}</div>
        <div class="cell msg">${fit("131%", 45)}<div class="btn zoom">${fit("Fit", 20)}<div class="sep"></div>${fit("100%", 44)}</div></div>
        <div class="cell zi">${mag(false)}</div>
        <div class="cell sl"><svg width="102" height="30"><path d="M2 14.500h98" stroke="#777" stroke-width="2"/><path d="M2 16h98" stroke="#fff"/><path d="M21 0h16v30H21z" fill="#f0f0f0"/><path d="M21.500 29V.5H36" stroke="#fff" fill="none"/><path d="M36 0v29H21" fill="none" stroke="#777" stroke-width="2"/></svg></div>
        <div class="cell zo">${mag(true)}</div>
      </div>
      <div class="taskbar">
        <div class="wx">${ic(svg`<path d="M24 2q11 5 11 16q0 15-15 16q-12-1-16-12q18 4 21-8q1-6-1-12z" fill="url(#moon)"/><path d="M6 14q-5 0-5-5q0-4 4-4q2-5 7-4q4 1 4 5q5 0 5 4q0 4-4 4z" fill="#bcd1fa" stroke="#8fb0ee"/>`, 35, 35)}</div>
        <div class="two">${fit("31°C", 35)}<span class="grey">${fit("Mostly clear", 98)}</span></div>
        <div class="start">${ic(svg`<path d="M0 2q0-2 2-2h15v17H0zM18.500 0H33q2 0 2 2v15H18.500zM0 18.500h17V35H2q-2 0-2-2zM18.500 18.500H35V33q0 2-2 2H18.500z" fill="url(#win)"/>`, 35, 35)}</div>
        <div class="search">
          ${ic(svg`<circle cx="9.500" cy="9" r="7.800" fill="none" stroke="#222" stroke-width="2.200"/><path d="M15 15l6 6.500" stroke="#222" stroke-width="2.800" stroke-linecap="round"/>`, 23, 23)}
          ${fit("Search", 61)}
          ${ic(svg`<defs><linearGradient id="bg" x1="0" y1="1" x2="1" y2="0"><stop offset="0" stop-color="#1747d0"/><stop offset="1" stop-color="#22c3f0"/></linearGradient></defs><path d="M16 2a13.500 13.500 0 1 1-6 26l-8 1.500l1.500-6A13.500 13.500 0 0 1 16 2z" fill="#fff" stroke="url(#bg)" stroke-width="2.200"/><path d="M11 7l4 1.500v10l-4 4z" fill="#1d8fe8"/><path d="M11 22.500v-5l5-2l-1.500-3.500q8 2 8 6q-1 4-7.500 6.500z" fill="#1f62dd"/>`, 31, 31)}
        </div>
        <div class="apps">
          ${TASKS.map(([g, c]) => html`<div class=${"app " + (c === "active" ? "active" : "")}>${ic(g, 36, 36)}${c ? html`<i class="pip"></i>` : ""}${c.includes("badge") ? html`<span class="bdg">K</span>` : ""}</div>`)}
        </div>
        <div class="tray">
          <div class="caret">${ic(svg`<path d="M1 9.500L8.500 2L16 9.500" fill="none" stroke="#222" stroke-width="2"/>`, 17, 11)}</div>
          <div class="two lang">${fit("ENG", 34)}${fit("IN", 17)}</div>
          <div class="wifi">${ic(svg`<path d="M1 9q11-10 22 0" fill="none" stroke="#aaa" stroke-width="1.800"/><path d="M4 12.500q8-7 16 0M7.500 15.500q4.500-4 9 0" fill="none" stroke="#222" stroke-width="1.800"/><circle cx="12" cy="19" r="2" fill="#222"/>`, 24, 24)}</div>
          <div class="spk">${ic(svg`<path d="M1 9h4l6-5v16l-6-5H1z" fill="none" stroke="#222" stroke-width="1.600" stroke-linejoin="round"/><path d="M14 9q2 3 0 6M17 6.500q4 5.500 0 11M20 4q6 8 0 16" fill="none" stroke="#222" stroke-width="1.500"/>`, 25, 24)}</div>
          <div class="bat">${ic(svg`<rect x="1" y="5.500" width="19" height="14" rx="3" fill="none" stroke="#222" stroke-width="1.700"/><rect x="3.500" y="8" width="10" height="9" rx="1" fill="#222"/><path d="M21 10q3 0 3 2.500t-3 2.500z" fill="#222"/>`, 24, 24)}</div>
          <div class="two clock">${fit("20:28", 43)}${fit("22-08-2023", 93)}</div>
        </div>
      </div>
    </div>`;
  }
}
